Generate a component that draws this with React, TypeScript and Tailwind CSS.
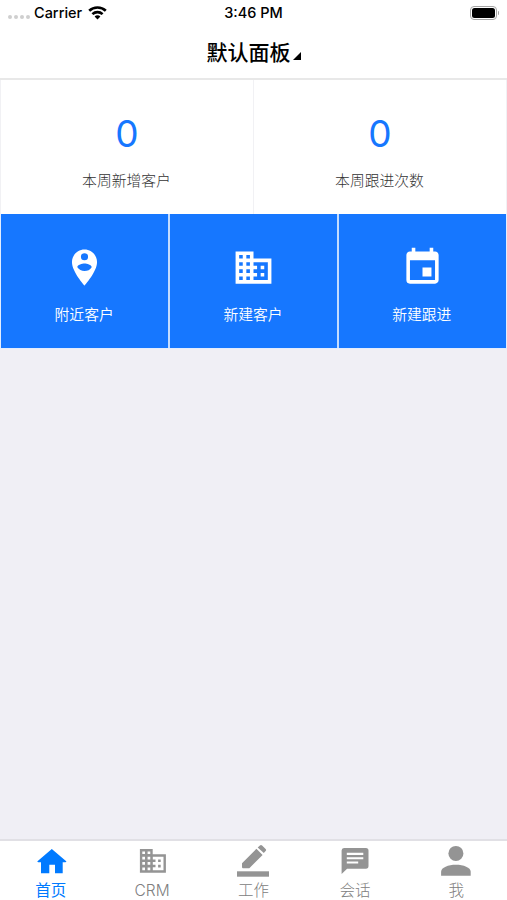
import type { ReactNode } from 'react';
import { MdBusiness, MdEvent, MdPersonPinCircle } from 'react-icons/md';

function StatusBar() {
  return (
    <div className="grid h-[26px] grid-cols-3 items-center px-2 text-[14.5px] font-medium leading-none">
      <div className="flex items-center">
        <div className="mt-2 flex gap-[2px]">
          {[0, 1, 2, 3].map((n) => (
            <i key={n} className="size-[4px] rounded-full bg-[#cfcfcf]" />
          ))}
        </div>
        <span className="ml-[4px]">Carrier</span>
        <svg className="ml-[6px] h-[14px] w-[19px]" viewBox="0 0 19 14" fill="none" stroke="black" strokeWidth="2.6">
          <path d="M1.2 4.8C5.7.4 13.3.4 17.8 4.8M4.4 8.1c2.9-2.7 7.3-2.7 10.2 0" />
          <path d="M6.6 10.4c1.6-1.5 4.2-1.5 5.8 0L9.5 13.5Z" fill="black" stroke="none" />
        </svg>
      </div>
      <span className="text-center">3:46 PM</span>
      <div className="flex items-center justify-end gap-px">
        <div className="h-[14px] w-[27px] rounded-[4px] border border-[#a5a5a5] p-[1px]">
          <div className="h-full rounded-[2.5px] bg-black" />
        </div>
        <div className="h-1 w-[1.5px] rounded-r bg-[#a5a5a5]" />
      </div>
    </div>
  );
}

function Stat({ label }: { label: string }) {
  return (
    <div className="flex flex-col items-center bg-white pt-[34px]">
      <span className="font-['Inter','Liberation_Sans',sans-serif] text-[37px] font-normal leading-[40px] text-[#1677ff]">0</span>
      <span className="mt-[17px] mr-px text-[14.8px] font-light leading-5 text-[#333]">{label}</span>
    </div>
  );
}

function Action({ icon, label }: { icon: ReactNode; label: string }) {
  return (
    <div className="flex flex-col items-center bg-[#1677ff] pt-[32px] text-white">
      {icon}
      <span className="mt-[16px] mr-px text-[14.8px] font-[350] leading-5">{label}</span>
    </div>
  );
}

function Tab({ icon, label, active }: { icon: ReactNode; label: string; active?: boolean }) {
  return (
    <div className={`flex flex-col items-center ${active ? 'text-[#007aff]' : 'text-[#949494]'}`}>
      <svg className="h-[40px] w-[34px]" viewBox="0 0 34 40" fill="currentColor">{icon}</svg>
      <span className={`text-[15.5px] leading-5 ${active ? 'font-normal' : 'font-light text-[#808080]'}`}>{label}</span>
    </div>
  );
}

const homeIcon = <path d="M17.8 8 3.2 20.5l1 .7H7v11.1h8.3v-8.6H21v8.6h7.7V21.2h2.8l1-.7Z" />;

const crmIcon = (
  <path
    fillRule="evenodd"
    d="M4.9 8h12.8v5.2h13.2v18.6h-26Zm2.4 2.4v2.7H10v-2.7Zm5.3 0v2.7h2.7v-2.7Zm-5.3 5.3v2.7H10v-2.7Zm5.3 0v2.7h2.7v-2.7ZM7.3 21v2.7H10V21Zm5.3 0v2.7h2.7V21Zm-5.3 5.4v2.8H10v-2.8Zm5.3 0v2.8h2.7v-2.8Zm5.2-10.7v2.8h2.7v2.5h-2.7v2.7h2.7v2.6h-2.7v3h10.7V15.7Zm5.3 2.8h2.6v2.6h-2.6Zm0 5.3h2.6v2.6h-2.6Z"
  />
);

const workIcon = (
  <>
    <path d="M1 30.3h32v5.4H1Z" />
    <path d="M6 22.2 20.4 7.8l6.2 6.2-13.3 13.3H7.4c-.8 0-1.4-.6-1.4-1.4ZM21.7 6.5l2.2-2.1c.7-.7 1.5-.7 2.2 0l3.5 3.5c.7.7.7 1.5 0 2.2l-1.8 1.8Z" />
  </>
);

const chatIcon = (
  <path
    fillRule="evenodd"
    d="M6 7h21.9a2.6 2.6 0 0 1 2.6 2.6v15.5a2.6 2.6 0 0 1-2.6 2.6H9.1L3.6 33V9.6A2.6 2.6 0 0 1 6 7Zm2.8 4.8v2.1h16.5v-2.1Zm0 4.4v2.1h16.5v-2.1Zm0 4.4v2h11.4v-2Z"
  />
);

const profileIcon = (
  <>
    <circle cx="16.9" cy="12.4" r="7.5" />
    <path d="M2.1 34.7v-4c0-4.3 7.2-7 14.8-7s14.8 2.7 14.8 7v4Z" />
  </>
);

export default function App() {
  return (
    <div className="flex h-[900px] w-[507px] flex-col overflow-hidden bg-[#f0eff5] font-['Inter','Noto_Sans_CJK_SC',sans-serif] text-black">
      <header className="h-[80px] shrink-0 border-b-2 border-[#e8e8e8] bg-white">
        <StatusBar />
        <div className="flex h-[54px] items-center justify-center gap-[2px] text-[21px] font-medium">
          <h1>默认面板</h1>
          <svg className="mt-[5px] size-2" viewBox="0 0 8 8"><path d="M8 0v8H0Z" /></svg>
        </div>
      </header>
      <section className="grid h-[134px] shrink-0 grid-cols-2 gap-px bg-[#f1f1f4] px-px">
        <Stat label="本周新增客户" />
        <Stat label="本周跟进次数" />
      </section>
      <section className="grid h-[135px] shrink-0 grid-cols-3 gap-[1.5px] border border-t-0 border-[#e2edff] bg-[#c3dcff]">
        <Action icon={<MdPersonPinCircle size={43} />} label="附近客户" />
        <Action icon={<MdBusiness size={43} />} label="新建客户" />
        <Action icon={<MdEvent size={43} />} label="新建跟进" />
      </section>
      <nav className="mt-auto grid h-[61px] shrink-0 grid-cols-5 border-t-2 border-[#e1e0e5] bg-white">
        <Tab active icon={homeIcon} label="首页" />
        <Tab icon={crmIcon} label="CRM" />
        <Tab icon={workIcon} label="工作" />
        <Tab icon={chatIcon} label="会话" />
        <Tab icon={profileIcon} label="我" />
      </nav>
    </div>
  );
}
